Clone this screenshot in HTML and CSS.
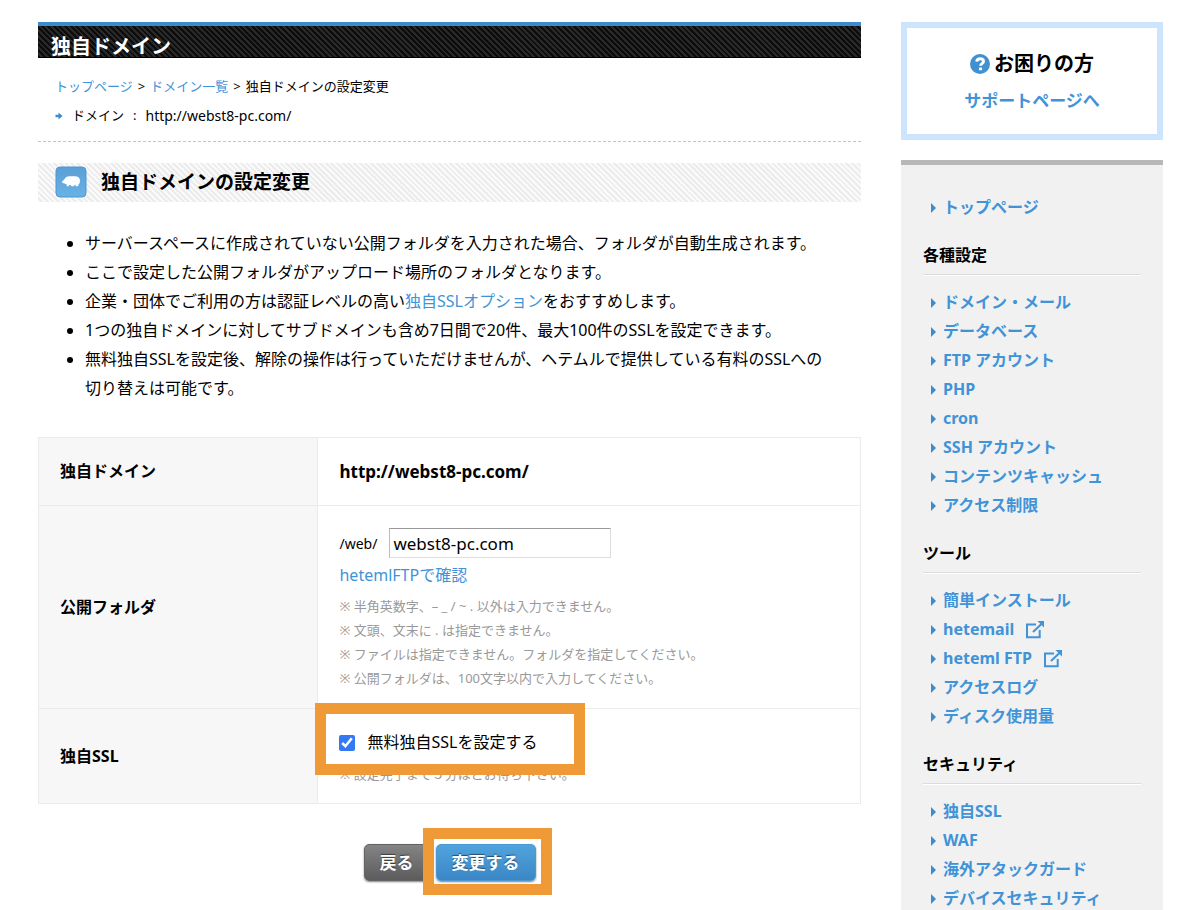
FILE: index.html
```html
<!DOCTYPE html>
<html lang="ja">
<head>
<meta charset="utf-8">
<meta name="viewport" content="width=device-width, initial-scale=1">
<title>独自ドメインの設定変更</title>
<link rel="stylesheet" href="styles.css">
</head>
<body>
<div class="page">
  <main class="main">
    <h1 class="page-title">独自ドメイン</h1>
    <div class="intro">
      <nav class="breadcrumb"><a href="#">トップページ</a><span>&gt;</span><a href="#">ドメイン一覧</a><span>&gt;</span><span>独自ドメインの設定変更</span></nav>
      <p class="current-domain">
        <svg class="arrow-icon" viewBox="0 0 8 8" aria-hidden="true"><path d="M0.500 2.800h3V.5L7.500 4 3.500 7.500V5.200h-3z"/></svg>
        <span>ドメイン</span><span>:</span><span class="domain-url">http://webst8-pc.com/</span>
      </p>
    </div>
    <h2 class="section-title">
      <svg class="section-icon" viewBox="0 0 32 32" aria-hidden="true">
        <defs><linearGradient id="tile" x1="0" y1="0" x2="0" y2="1"><stop offset="0" stop-color="#5a9fd6"/><stop offset="1" stop-color="#69b2e6"/></linearGradient></defs>
        <rect x="1" y="1" width="30" height="30" rx="4" fill="url(#tile)" stroke="#4f97d0"/>
        <path d="M7 15.500c1-.5 1.500-1.500 2.500-2.200.8-1.800 2.500-2.900 5-3h5.500c3 0 5 1.700 5 4.500 0 2-.8 3-1.500 4l-.4 1.500h-2.300l-.6-1.500-.8.1-.5 1.400h-2.400l-.7-1.300h-1.500l-.6 1.300h-1.900l-.4-2.200c-1.200 0-1.700-.5-2.300-.9-.9.2-1.700-.2-2.100-.9z" fill="#fff"/>
      </svg>
      独自ドメインの設定変更
    </h2>
    <ul class="notes-list">
      <li>サーバースペースに作成されていない公開フォルダを入力された場合、フォルダが自動生成されます。</li>
      <li>ここで設定した公開フォルダがアップロード場所のフォルダとなります。</li>
      <li>企業・団体でご利用の方は認証レベルの高い<a href="#">独自SSLオプション</a>をおすすめします。</li>
      <li>1つの独自ドメインに対してサブドメインも含め7日間で20件、最大100件のSSLを設定できます。</li>
      <li>無料独自SSLを設定後、解除の操作は行っていただけませんが、ヘテムルで提供している有料のSSLへの切り替えは可能です。</li>
    </ul>
    <form class="settings">
      <table class="settings-table">
        <tr>
          <th scope="row">独自ドメイン</th>
          <td class="domain-cell">http://webst8-pc.com/</td>
        </tr>
        <tr>
          <th scope="row"><label for="folder">公開フォルダ</label></th>
          <td class="folder-cell">
            <div class="folder-row"><span class="folder-prefix">/web/</span><input class="folder-input" id="folder" type="text" value="webst8-pc.com"></div>
            <a class="ftp-link" href="#">hetemlFTPで確認</a>
            <ul class="hints">
              <li>※ 半角英数字、– _ / ~ . 以外は入力できません。</li>
              <li>※ 文頭、文末に . は指定できません。</li>
              <li>※ ファイルは指定できません。フォルダを指定してください。</li>
              <li>※ 公開フォルダは、100文字以内で入力してください。</li>
            </ul>
          </td>
        </tr>
        <tr>
          <th scope="row">独自SSL</th>
          <td class="ssl-cell">
            <div class="ssl-option">
              <input class="ssl-check" id="ssl" type="checkbox" checked>
              <label for="ssl">無料独自SSLを設定する</label>
            </div>
            <p class="hints ssl-hint">※ 設定完了まで５分ほどお待ち下さい。</p>
            <div class="marker marker-ssl"></div>
          </td>
        </tr>
      </table>
      <div class="actions">
        <button class="btn btn-back" type="button">戻る</button>
        <div class="submit-wrap">
          <div class="marker marker-submit"></div>
          <button class="btn btn-submit" type="submit">変更する</button>
        </div>
      </div>
    </form>
  </main>
  <aside class="side">
    <div class="help-box">
      <p class="help-title"><svg class="help-icon" viewBox="0 0 20 20" aria-hidden="true"><circle cx="10" cy="10" r="10" fill="#4190cf"/><path d="M6.700 7.600C6.900 5.700 8.200 4.700 10.100 4.700c2 0 3.400 1 3.400 2.700 0 2.300-2.900 2.200-2.900 4.400" fill="none" stroke="#fff" stroke-width="2.900"/><rect x="9" y="13.400" width="3.100" height="2.900" rx=".6" fill="#fff"/></svg>お困りの方</p>
      <a class="help-link" href="#">サポートページへ</a>
    </div>
    <nav class="menu">
      <ul class="menu-list"><li><a href="#">トップページ</a></li></ul>
      <h3 class="menu-title">各種設定</h3>
      <ul class="menu-list">
        <li><a href="#">ドメイン・メール</a></li>
        <li><a href="#">データベース</a></li>
        <li><a href="#">FTP アカウント</a></li>
        <li><a href="#">PHP</a></li>
        <li><a href="#">cron</a></li>
        <li><a href="#">SSH アカウント</a></li>
        <li><a href="#">コンテンツキャッシュ</a></li>
        <li><a href="#">アクセス制限</a></li>
      </ul>
      <h3 class="menu-title">ツール</h3>
      <ul class="menu-list">
        <li><a href="#">簡単インストール</a></li>
        <li><a href="#">hetemail<svg class="ext-icon" viewBox="0 0 20 18" aria-hidden="true"><path d="M11 3.500H2v12.800h12.700V9M8 11l9-8.500"/><path class="ext-head" d="M12.500 0H19v6.500z"/></svg></a></li>
        <li><a href="#">heteml FTP<svg class="ext-icon" viewBox="0 0 20 18" aria-hidden="true"><path d="M11 3.500H2v12.800h12.700V9M8 11l9-8.500"/><path class="ext-head" d="M12.500 0H19v6.500z"/></svg></a></li>
        <li><a href="#">アクセスログ</a></li>
        <li><a href="#">ディスク使用量</a></li>
      </ul>
      <h3 class="menu-title">セキュリティ</h3>
      <ul class="menu-list">
        <li><a href="#">独自SSL</a></li>
        <li><a href="#">WAF</a></li>
        <li><a href="#">海外アタックガード</a></li>
        <li><a href="#">デバイスセキュリティ</a></li>
      </ul>
    </nav>
  </aside>
</div>
</body>
</html>
```
FILE: styles.css
```css
* { box-sizing: border-box; }

body {
  margin: 0;
  background: #fff;
  color: #000;
  font-family: "Noto Sans", "Noto Sans CJK JP", sans-serif;
  font-size: 16px;
  line-height: 29px;
}

h1, h2, h3, p, ul { margin: 0; padding: 0; }
a { color: #4193d8; text-decoration: none; }

.page {
  display: flex;
  align-items: flex-start;
  gap: 40px;
  padding: 22px 37px 0 38px;
}
.main { flex: 1; min-width: 0; }
.side { flex: 0 0 262px; }

.page-title {
  padding: 10px 13px 0;
  border-top: 4px solid #3c8ccd;
  border-bottom: 1px solid #000;
  background: repeating-linear-gradient(45deg, #0c0c0c 0 2px, #292929 2px 4px);
  color: #fff;
  font-size: 20px;
  line-height: 21px;
}

.intro {
  padding: 14px 17px 11px;
  border-bottom: 1px dashed #c4c4c4;
  font-size: 13px;
}
.breadcrumb { display: flex; gap: 5px; }
.current-domain { display: flex; align-items: center; gap: 9px; }
.domain-url { font-size: 14px; }
.arrow-icon { width: 8px; height: 8px; fill: #3c8ccd; }

.section-title {
  display: flex;
  align-items: center;
  gap: 14px;
  margin-top: 21px;
  padding: 3px 17px 4px;
  background: repeating-linear-gradient(45deg, #fafafa 0 2px, #ececec 2px 4px);
  font-size: 19px;
  line-height: 32px;
}
.section-icon { width: 32px; height: 32px; }

.notes-list { margin: 27px 26px 0 47px; }

.settings { margin-top: 34px; }
.settings-table { width: 100%; border-collapse: collapse; }
.settings-table th,
.settings-table td {
  border: 1px solid #ebebeb;
  padding: 19px 21px;
  text-align: left;
}
.settings-table th { width: 34%; background: #f7f7f7; }
.settings-table .domain-cell { font-size: 17px; font-weight: 700; }
.settings-table .folder-cell { padding-top: 22px; padding-bottom: 18px; }

.folder-row { display: flex; align-items: center; gap: 12px; }
.folder-prefix { font-size: 14px; }
.folder-input {
  width: 222px;
  height: 30px;
  padding: 0 3px;
  border: 1px solid #ddd;
  border-top-color: #999;
  border-left-color: #bbb;
  background: #fff;
  font: 17px "Noto Sans", sans-serif;
}
.ftp-link { display: block; margin-bottom: 2px; line-height: 34px; }
.hints { list-style: none; color: #999; font-size: 13px; line-height: 24px; }

.settings-table .ssl-cell { position: relative; padding-bottom: 17px; }
.ssl-option { display: flex; align-items: center; gap: 12px; }
.ssl-hint { margin-top: 5px; }
.ssl-check { width: 16px; height: 16px; margin: 0; accent-color: #3478f6; }

.marker {
  position: absolute;
  border: 11px solid #f09a37;
  pointer-events: none;
}
.marker-ssl { top: -6px; left: -3px; width: 270px; height: 72px; }
.marker-submit { inset: -16px -16px -14px -13px; background: #fff; }

.actions { display: flex; justify-content: center; gap: 6px; margin-top: 40px; }
.submit-wrap { position: relative; }
.btn {
  position: relative;
  height: 37px;
  padding: 0 15px;
  border-radius: 5px;
  color: #fff;
  font-family: inherit;
  font-size: 17px;
  font-weight: 700;
  line-height: 33px;
  text-shadow: 0 -1px 1px rgba(0, 0, 0, .5);
  box-shadow: 0 1px 2px rgba(0, 0, 0, .5);
}
.btn-back { position: static; border: 1px solid #636363; background: linear-gradient(#848484, #5c5c5c); }
.btn-submit { border: 1px solid #4a97d2; background: linear-gradient(#50a3dd, #3b87c6); }

.help-box {
  padding: 17px 6px 15px;
  border: 6px solid #cce4fc;
  text-align: center;
  font-weight: 700;
  line-height: 37px;
}
.help-title { display: flex; align-items: center; justify-content: center; gap: 4px; font-size: 20px; }
.help-icon { width: 20px; height: 20px; }
.help-link { display: block; font-size: 17px; }

.menu {
  margin-top: 20px;
  padding: 28px 22px 0;
  border-top: 5px solid #b8b8b8;
  background: #f1f1f1;
  font-weight: 700;
}
.menu-title {
  margin: 19px 0 13px;
  padding-bottom: 4px;
  border-bottom: 1px solid #dcdcdc;
  box-shadow: 0 1px #fff;
  font-size: 16px;
}
.menu-list { list-style: none; padding-left: 8px; }
.menu-list li { display: flex; align-items: center; gap: 7px; }
.menu-list li::before {
  content: "";
  border: 5px solid transparent;
  border-left-color: #3c8ccd;
  border-right-width: 0;
}
.menu-list a { display: flex; align-items: center; gap: 11px; }
.ext-icon { width: 20px; height: 18px; fill: none; stroke: #4193d8; stroke-width: 2; }
.ext-icon .ext-head { fill: #4193d8; stroke: none; }
```
